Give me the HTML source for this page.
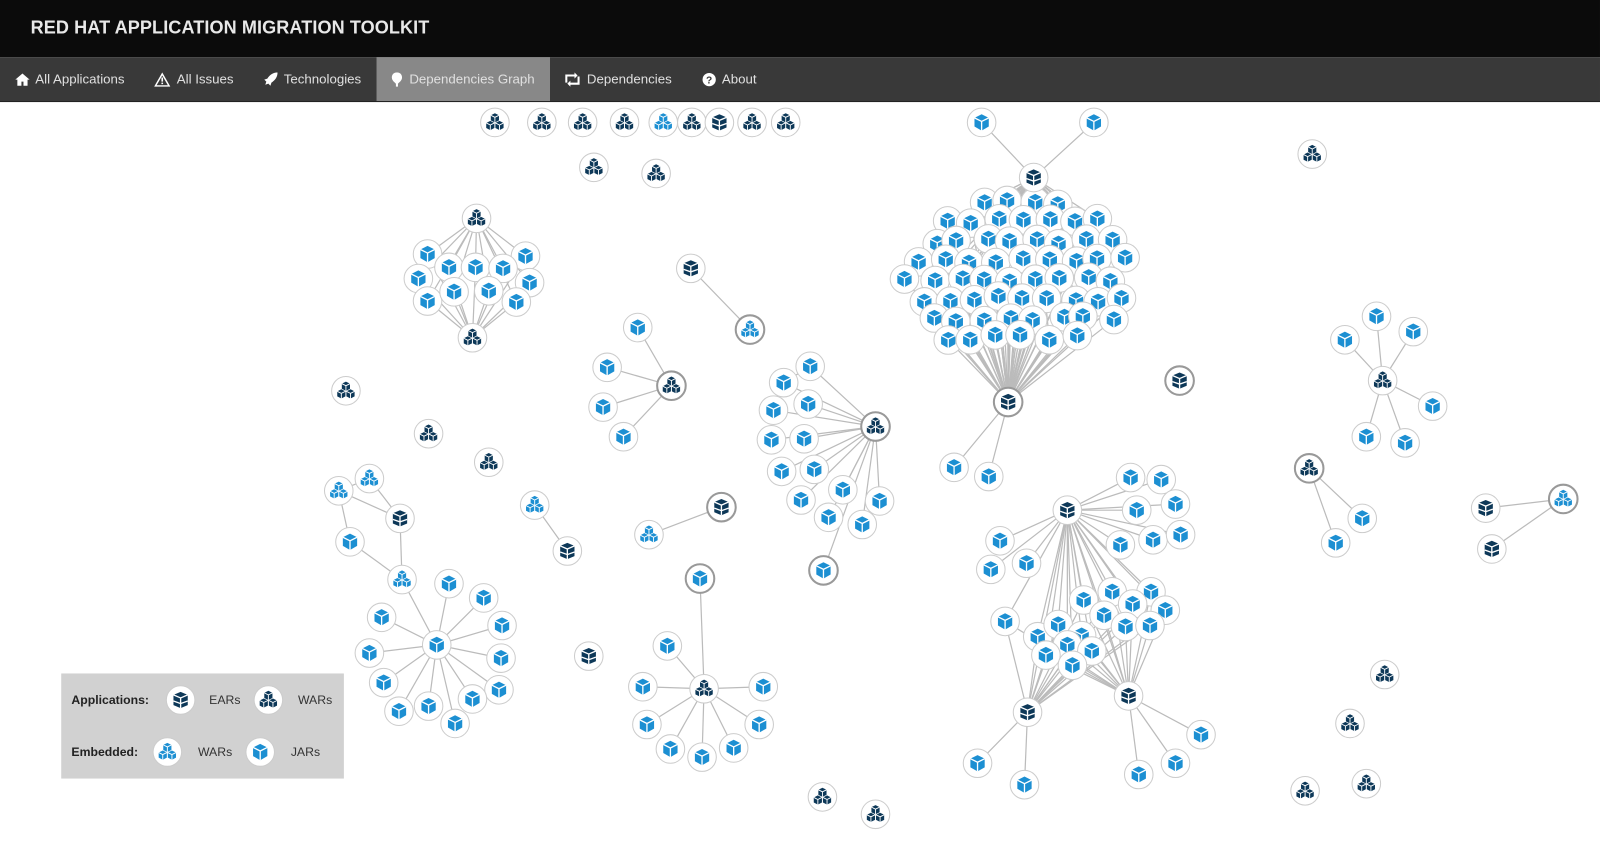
<!DOCTYPE html>
<html><head><meta charset="utf-8"><style>
body{margin:0;width:1600px;height:835px;overflow:hidden;background:#fff;font-family:"Liberation Sans",sans-serif}
#wr{position:absolute;left:0;top:0;width:1568px;height:820px;transform:scale(1.0204);transform-origin:0 0}
.hd{height:56px;background:#0b0b0b;color:#e8e8e8;font-weight:bold;font-size:17.7px;line-height:54px;padding-left:30px;letter-spacing:0.1px}
.nav{height:44px;background:#393939;display:flex;border-bottom:1px solid #222;box-sizing:border-box}
.nav div{color:#e0e0e0;font-size:13px;line-height:44px;padding:0 14.6px;display:flex;align-items:center;gap:6px}
.nav .a{background:#888}
.nav svg{fill:#fff}
#g{position:absolute;left:0;top:100px}
.lg{position:absolute;left:60px;top:660px;width:277px;height:103px;background:#d1d1d1;font-size:12px;color:#333}
.lg b{position:absolute;color:#222}
.lg span{position:absolute}
</style></head><body><div id="wr">
<div class="hd">RED HAT APPLICATION MIGRATION TOOLKIT</div>
<div class="nav">
<div><svg width="14" height="14" viewBox="0 0 14 14"><path d="M7 1L0 7h2v6h4V9h2v4h4V7h2z"/></svg>All Applications</div>
<div><svg width="16" height="14" viewBox="0 0 16 14"><path d="M8 0L0 14h16zM8 3l5.5 9.5h-11z M7.2 5h1.6v4H7.2zM7.2 10h1.6v1.5H7.2z" fill-rule="evenodd"/></svg>All Issues</div>
<div><svg width="14" height="14" viewBox="0 0 14 14"><path d="M14 0C9 0 6 3 4 6L1 7l2 2-1 3 3-1 2 2 1-3c3-2 6-5 6-10z"/></svg>Technologies</div>
<div class="a"><svg width="12" height="14" viewBox="0 0 12 14"><path d="M6 0C2 0 1 3 1 5c0 3 3 5 4 6v3h2v-3c1-1 4-3 4-6 0-2-1-5-5-5z"/></svg>Dependencies Graph</div>
<div><svg width="16" height="14" viewBox="0 0 16 14"><path d="M1 2h9V0l3 3-3 3V4H3v6H1zM15 12H6v2l-3-3 3-3v2h7V4h2z"/></svg>Dependencies</div>
<div><svg width="14" height="14" viewBox="0 0 14 14"><circle cx="7" cy="7" r="6.5"/><text x="7" y="11" font-size="10" font-weight="bold" fill="#393939" text-anchor="middle" font-family="Liberation Sans">?</text></svg>About</div>
</div>
<svg id="g" width="1568" height="735" viewBox="0 100 1568 735">
<defs>
<symbol id="J" viewBox="-10 -10 20 20"><path d="M0-8L7-4.5V4L0 8-7 4v-8.5z" fill="#1c8fd2"/><path d="M-7-4.5L0-1 7-4.5M0-1V8" stroke="#fff" stroke-width="1.3" fill="none"/></symbol>
<symbol id="c3" viewBox="-10 -10 20 20"><g id="cb"><path d="M0-5L4-3V2L0 4-4 2v-5z"/><path d="M-4-3L0-1 4-3M0-1V4" stroke="#fff" stroke-width="0.9" fill="none"/></g></symbol>
<symbol id="W" viewBox="-10 -10 20 20"><g fill="#0d3858"><use href="#cb" x="0" y="-4"/><use href="#cb" x="-4.5" y="3.5"/><use href="#cb" x="4.5" y="3.5"/></g></symbol>
<symbol id="w" viewBox="-10 -10 20 20"><g fill="#1c8fd2"><use href="#cb" x="0" y="-4"/><use href="#cb" x="-4.5" y="3.5"/><use href="#cb" x="4.5" y="3.5"/></g></symbol>
<symbol id="E" viewBox="-10 -10 20 20"><path d="M-7-5L0-8 7-5V5L0 8-7 5z" fill="#0d3858"/><path d="M-7-5L0-2 7-5M0-2V8M-7 1L0 3.5 7 1" stroke="#fff" stroke-width="1.3" fill="none"/></symbol>
</defs>
<g id="edges" stroke="#bbb" stroke-width="1.2"></g>
<g id="nodes"></g>
</svg>
<div class="lg">
<b style="left:10px;top:19px">Applications:</b>
<svg style="position:absolute;left:100px;top:9px" width="34" height="34"><circle cx="17" cy="17" r="14" fill="#fff" stroke="#ccc"/><use href="#E" x="7" y="7" width="20" height="20"/></svg>
<span style="left:145px;top:19px">EARs</span>
<svg style="position:absolute;left:186px;top:9px" width="34" height="34"><circle cx="17" cy="17" r="14" fill="#fff" stroke="#ccc"/><use href="#W" x="7" y="7" width="20" height="20"/></svg>
<span style="left:232px;top:19px">WARs</span>
<b style="left:10px;top:70px">Embedded:</b>
<svg style="position:absolute;left:87px;top:60px" width="34" height="34"><circle cx="17" cy="17" r="14" fill="#fff" stroke="#ccc"/><use href="#w" x="7" y="7" width="20" height="20"/></svg>
<span style="left:134px;top:70px">WARs</span>
<svg style="position:absolute;left:178px;top:60px" width="34" height="34"><circle cx="17" cy="17" r="14" fill="#fff" stroke="#ccc"/><use href="#J" x="7" y="7" width="20" height="20"/></svg>
<span style="left:225px;top:70px">JARs</span>
</div>
</div>
<script>
var N=[],E=[];
function n(t,x,y,k){N.push([t,x,y,k]);return [x,y];}
function e(a,b){E.push([a[0],a[1],b[0],b[1]]);}
function star(c,l){l.forEach(function(p){e(c,n('J',p[0],p[1]));});}
[[485,'W'],[531,'W'],[571,'W'],[612,'W'],[650,'w'],[678,'W'],[705,'E'],[737,'W'],[770,'W']].forEach(function(a){n(a[1],a[0],120)});
n('W',582,164);n('W',643,170);
var a=[467,214],b=[463,331];
[[419,249],[515,251],[410,273],[440,262],[466,262],[493,263],[519,277],[419,295],[445,286],[479,285],[506,296]].forEach(function(p){e(a,p);e(b,p);n('J',p[0],p[1]);});
n('W',467,214);n('W',463,331);
e([677,263],[735,323]);n('E',677,263);n('w',735,323,1);
n('W',339,383);n('W',420,425);n('W',479,453);
star([658,378],[[625,321],[595,360],[591,399],[611,428]]);n('W',658,378,1);
var c=[858,418];star(c,[[794,359],[768,375],[792,396],[758,402],[756,431],[788,430],[766,462],[798,460],[826,480],[785,490],[862,491],[812,507],[845,514]]);
e(c,[807,559]);n('J',807,559,1);e([794,359],[768,375]);n('W',858,418,1);
var T=[1013,174],B=[988,394];
e(T,[962,120]);e(T,[1072,120]);e(B,[935,458]);e(B,[969,467]);
var s=7;function r(){s=(s*9301+49297)%233280;return s/233280;}
var bl=[];
for(var y=198,row=0;y<=345;y+=19,row++){for(var x=890+(row%2)*13;x<=1112;x+=25){var dx=(x-1000)/112,dy=(y-270)/80;if(dx*dx+dy*dy<1){var px=x+(r()-0.5)*8,py=y+(r()-0.5)*6;bl.push([px,py]);e(T,[px,py]);e(B,[px,py]);}}}
bl.forEach(function(p){n('J',p[0],p[1]);});
n('J',962,120);n('J',1072,120);n('J',935,458);n('J',969,467);n('E',1013,174);n('E',988,394,1);
n('E',1156,373,1);n('W',1286,151);
star([1355,373],[[1318,333],[1349,310],[1385,325],[1404,398],[1339,428],[1377,434]]);n('W',1355,373);
star([1283,459],[[1335,508],[1309,532]]);n('W',1283,459,1);
e([1456,498],[1532,489]);e([1462,538],[1532,489]);n('E',1456,498);n('E',1462,538);n('w',1532,489,1);
n('W',1357,661);n('W',1323,709);n('W',1279,775);n('W',1339,768);
var A=[332,481],Bq=[362,469],C=[392,508],D=[343,531],F=[394,568];
e(A,Bq);e(A,C);e(Bq,C);e(A,D);e(D,F);e(C,F);
var S=[428,632];e(S,F);
star(S,[[374,605],[440,572],[474,586],[492,613],[491,645],[489,676],[463,685],[446,709],[420,692],[391,697],[376,669],[362,640]]);
n('w',332,481);n('w',362,469);n('E',392,508);n('J',343,531);n('w',394,568);n('J',428,632);
e([524,495],[556,540]);n('w',524,495);n('E',556,540);
e([707,497],[636,524]);n('E',707,497,1);n('w',636,524);n('E',577,643);
var P=[690,675];e(P,[686,567]);star(P,[[654,633],[630,673],[748,673],[634,710],[744,710],[657,734],[688,742],[719,733]]);n('J',686,567,1);n('W',690,675);
var G=[1046,500],H=[1007,698],K=[1106,682];
star(G,[[1108,468],[1138,470],[1114,500],[1152,494],[1098,534],[1130,529],[1157,524],[980,530],[1006,552],[971,558]]);
var mid=[[985,609],[1017,624],[1062,588],[1090,580],[1128,580],[1110,592],[1082,603],[1142,598],[1103,614],[1127,613],[1037,612],[1060,623],[1046,632],[1070,638],[1025,642],[1051,652]];
mid.forEach(function(p){e(G,p);e(H,p);e(K,p);n('J',p[0],p[1]);});
e(G,H);e(G,K);
star(H,[[958,748],[1004,769]]);star(K,[[1116,759],[1152,748],[1177,720]]);
n('E',1046,500);n('E',1007,698);n('E',1106,682);
n('W',806,781);n('W',858,798);
var eg=document.getElementById('edges'),ng=document.getElementById('nodes'),h='',m='';
E.forEach(function(l){h+='<line x1="'+l[0]+'" y1="'+l[1]+'" x2="'+l[2]+'" y2="'+l[3]+'"/>';});
N.forEach(function(q){m+='<circle cx="'+q[1]+'" cy="'+q[2]+'" r="14" fill="#fff" stroke="'+(q[3]?'#999':'#ccc')+'" stroke-width="'+(q[3]?2:1)+'"/><use href="#'+q[0]+'" x="'+(q[1]-10)+'" y="'+(q[2]-10)+'" width="20" height="20"/>';});
eg.innerHTML=h;ng.innerHTML=m;
</script>
</body></html>
